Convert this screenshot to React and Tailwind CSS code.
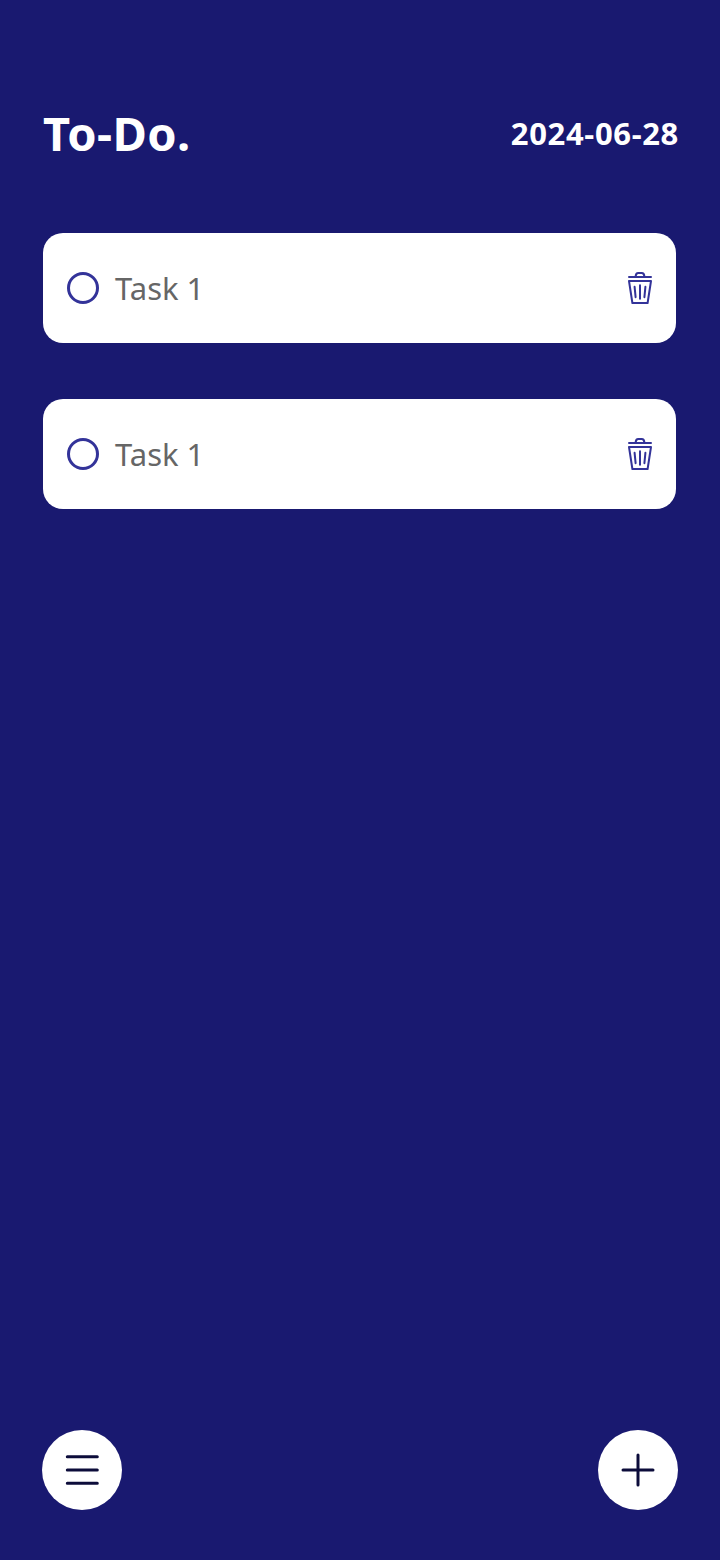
const tasks = [
  { id: 1, label: 'Task 1' },
  { id: 2, label: 'Task 1' },
];

function TrashIcon() {
  return (
    <svg width="26" height="34" viewBox="0 0 26 34" fill="none" stroke="#333399" strokeWidth="2" strokeLinejoin="round" strokeLinecap="round">
      <path d="M2 6H24" />
      <path d="M8.6 5.6C8.8 3 10 2.1 11.2 2.1H14.8C16 2.1 17.2 3 17.4 5.6" />
      <path d="M2 10H24L20.6 32H5.4Z" />
      <path d="M7.6 15.8L8.6 26.2M18.4 15.8L17.4 26.2" />
      <path d="M13 14.2V27.8" />
    </svg>
  );
}

function TaskCard({ label }) {
  return (
    <li className="flex h-[110px] w-[633px] items-center rounded-[20px] bg-white pr-[23px] pl-6">
      <button aria-label="Complete task" className="size-8 rounded-full border-3 border-[#333399]" />
      <span className="ml-[16px] text-[31px] leading-none text-[#666666]">{label}</span>
      <button aria-label="Delete task" className="ml-auto">
        <TrashIcon />
      </button>
    </li>
  );
}

function RoundButton({ label, children }) {
  return (
    <button aria-label={label} className="flex size-20 items-center justify-center rounded-full bg-white">
      <svg width="40" height="40" viewBox="0 0 40 40" fill="none" stroke="#0c0c3a" strokeWidth="3" strokeLinecap="round">
        {children}
      </svg>
    </button>
  );
}

export default function App() {
  return (
    <div className="flex h-[1560px] w-[720px] flex-col bg-[#191970] pt-[101px] pb-[50px] font-['Noto_Sans',sans-serif]">
      <header className="flex h-[66px] items-center justify-between pr-[41px] pl-[43px] font-bold text-white">
        <h1 className="-mt-0.5 text-[47px] leading-none tracking-[0.4px]">To-Do.</h1>
        <time className="-mt-0.5 text-[31px] leading-none tracking-[0.65px]">2024-06-28</time>
      </header>
      <ul className="mt-[66px] flex flex-col gap-14 pl-[43px]">
        {tasks.map((task) => (
          <TaskCard key={task.id} label={task.label} />
        ))}
      </ul>
      <footer className="mt-auto flex justify-between px-[42px]">
        <RoundButton label="Menu">
          <path d="M5.3 6.7H35.3M5.3 20H35.3M5.3 33.3H35.3" />
        </RoundButton>
        <RoundButton label="Add task">
          <path d="M5 20H35M20 5V35" />
        </RoundButton>
      </footer>
    </div>
  );
}
